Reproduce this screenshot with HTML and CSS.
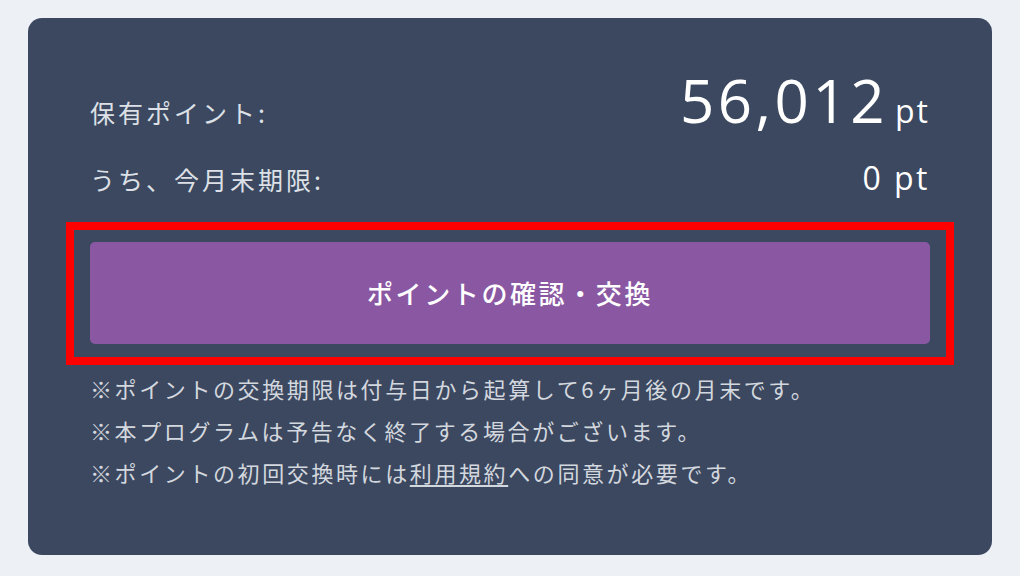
FILE: index.html
```html
<!DOCTYPE html>
<html lang="ja">
<head>
<meta charset="utf-8">
<title>ポイント</title>
<link rel="stylesheet" href="styles.css">
</head>
<body>
<div class="card">
  <div class="row row-main">
    <span class="label">保有ポイント:</span>
    <span class="value"><span class="big">56,012</span><span class="unit">pt</span></span>
  </div>
  <div class="row row-sub">
    <span class="label">うち、今月末期限:</span>
    <span class="value"><span class="small">0 pt</span></span>
  </div>
  <a class="btn" href="#">ポイントの確認・交換</a>
  <ul class="notes">
    <li>※ポイントの交換期限は付与日から起算して6ヶ月後の月末です。</li>
    <li>※本プログラムは予告なく終了する場合がございます。</li>
    <li>※ポイントの初回交換時には<a class="link" href="#">利用規約</a>への同意が必要です。</li>
  </ul>
</div>
</body>
</html>
```
FILE: styles.css
```css
html, body {
  margin: 0;
  padding: 0;
}
body {
  background: #edf1f5;
  font-family: "Noto Sans CJK JP", "Noto Sans", sans-serif;
  width: 1020px;
  height: 576px;
  overflow: hidden;
}
.card {
  margin: 18px 0 0 28px;
  width: 964px;
  height: 537px;
  box-sizing: border-box;
  background: #3b4860;
  border-radius: 14px;
  padding: 52px 62px 0 62px;
}
.row {
  display: flex;
  justify-content: space-between;
  align-items: baseline;
}
.row-sub {
  margin-top: 26px;
}
.label {
  font-size: 25px;
  line-height: 30px;
  letter-spacing: 3px;
  color: #dde0e6;
}
.value {
  font-family: "Open Sans", "Liberation Sans", sans-serif;
  color: #ffffff;
}
.big {
  font-size: 60px;
  line-height: 60px;
  letter-spacing: 3.5px;
  margin-right: 7px;
}
.unit {
  font-size: 32px;
  letter-spacing: 2px;
}
.small {
  font-size: 32px;
  line-height: 40px;
  letter-spacing: 2.5px;
}
.btn {
  position: relative;
  display: block;
  margin-top: 44px;
  height: 102px;
  line-height: 102px;
  background: #8a58a3;
  border-radius: 5px;
  color: #ffffff;
  text-align: center;
  text-decoration: none;
  font-size: 26px;
  font-weight: 500;
  letter-spacing: 2.6px;
}
.btn::after {
  content: "";
  position: absolute;
  top: -20px;
  left: -24px;
  right: -24px;
  bottom: -21px;
  border: 8px solid #ff0000;
  pointer-events: none;
}
.notes {
  list-style: none;
  margin: 23px 0 0 0;
  padding: 0;
  font-size: 22px;
  line-height: 42px;
  letter-spacing: 2.6px;
  color: #d3d7de;
}
.link {
  color: inherit;
  text-decoration: underline;
  text-underline-offset: 3px;
}
```
